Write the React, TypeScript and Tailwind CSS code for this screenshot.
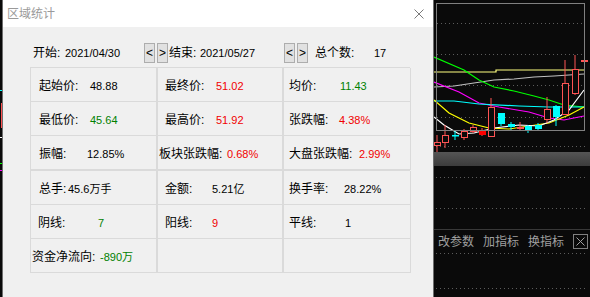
import clsx from 'clsx';

type Stat = {
  label: string;
  value: string;
  color: string;
  pad: string;
  labelW: string;
};

const RED = 'text-[#f00000]';
const GREEN = 'text-[#008000]';
const BLACK = 'text-black';

const priceRows: Stat[][] = [
  [
    { label: '起始价:', value: '48.88', color: BLACK, pad: 'pl-[8px]', labelW: 'w-[51px]' },
    { label: '最终价:', value: '51.02', color: RED, pad: 'pl-[7px]', labelW: 'w-[51px]' },
    { label: '均价:', value: '11.43', color: GREEN, pad: 'pl-[5px]', labelW: 'w-[51px]' },
  ],
  [
    { label: '最低价:', value: '45.64', color: GREEN, pad: 'pl-[8px]', labelW: 'w-[51px]' },
    { label: '最高价:', value: '51.92', color: RED, pad: 'pl-[7px]', labelW: 'w-[51px]' },
    { label: '张跌幅:', value: '4.38%', color: RED, pad: 'pl-[5px]', labelW: 'w-[50px]' },
  ],
  [
    { label: '振幅:', value: '12.85%', color: BLACK, pad: 'pl-[8px]', labelW: 'w-[48px]' },
    { label: '板块张跌幅:', value: '0.68%', color: RED, pad: 'pl-[1px]', labelW: 'w-[68px]' },
    { label: '大盘张跌幅:', value: '2.99%', color: RED, pad: 'pl-[5px]', labelW: 'w-[70px]' },
  ],
];

const volumeRows: (Stat | null)[][] = [
  [
    { label: '总手:', value: '45.6万手', color: BLACK, pad: 'pl-[8px]', labelW: 'w-[29px]' },
    { label: '金额:', value: '5.21亿', color: BLACK, pad: 'pl-[7px]', labelW: 'w-[47px]' },
    { label: '换手率:', value: '28.22%', color: BLACK, pad: 'pl-[5px]', labelW: 'w-[55px]' },
  ],
  [
    { label: '阴线:', value: '7', color: GREEN, pad: 'pl-[7px]', labelW: 'w-[60px]' },
    { label: '阳线:', value: '9', color: RED, pad: 'pl-[7px]', labelW: 'w-[47px]' },
    { label: '平线:', value: '1', color: BLACK, pad: 'pl-[5px]', labelW: 'w-[56px]' },
  ],
  [
    { label: '资金净流向:', value: '-890万', color: GREEN, pad: 'pl-[1px]', labelW: 'w-[68px]' },
    null,
    null,
  ],
];

function StatCell({ stat, last }: { stat: Stat | null; last: boolean }) {
  return (
    <div
      className={clsx(
        'flex h-[34px] items-center border-b border-[#dadada] pt-[3px] text-[12px] whitespace-nowrap',
        last ? 'border-r' : 'border-r-2',
        stat?.pad,
      )}
    >
      {stat ? (
        <>
          <span className={clsx('shrink-0 text-black', stat.labelW)}>{stat.label}</span>
          <span className={clsx('text-[11px]', stat.color)}>{stat.value}</span>
        </>
      ) : null}
    </div>
  );
}

function StatBlock({ rows }: { rows: (Stat | null)[][] }) {
  return (
    <div className="grid w-[380px] grid-cols-[127px_126px_127px] border-t border-l border-[#dadada]">
      {rows.flatMap((row, r) =>
        row.map((stat, c) => <StatCell key={`${r}-${c}`} stat={stat} last={c === 2} />),
      )}
    </div>
  );
}

function StepButton({ children, className }: { children: string; className?: string }) {
  return (
    <span
      className={clsx(
        'flex h-[20px] w-[11px] shrink-0 items-center justify-center border border-[#adadad] bg-[#e1e1e1] text-[12px] leading-none text-black',
        className,
      )}
    >
      {children}
    </span>
  );
}

function Dotted() {
  return (
    <div className="mx-[2px] h-px bg-[image:repeating-linear-gradient(90deg,#5c5c5c_0_1px,transparent_1px_4px)]" />
  );
}

type Candle = { x: number; top: number; bot: number; hi: number; lo: number; kind: 'up' | 'down' | 'fill' };

const candles: Candle[] = [
  { x: 0, top: 142, bot: 145, hi: 135, lo: 152, kind: 'up' },
  { x: 8, top: 135, bot: 142, hi: 125, lo: 148, kind: 'up' },
  { x: 18, top: 135, bot: 136, hi: 131, lo: 140, kind: 'down' },
  { x: 27, top: 131, bot: 137, hi: 129, lo: 140, kind: 'up' },
  { x: 36, top: 127, bot: 131, hi: 125, lo: 133, kind: 'up' },
  { x: 45, top: 130, bot: 135, hi: 128, lo: 136, kind: 'fill' },
  { x: 54, top: 107, bot: 136, hi: 98, lo: 136, kind: 'up' },
  { x: 64, top: 113, bot: 124, hi: 113, lo: 126, kind: 'down' },
  { x: 74, top: 124, bot: 127, hi: 122, lo: 130, kind: 'down' },
  { x: 83, top: 127, bot: 128, hi: 122, lo: 130, kind: 'up' },
  { x: 91, top: 126, bot: 131, hi: 125, lo: 133, kind: 'down' },
  { x: 101, top: 125, bot: 129, hi: 123, lo: 131, kind: 'down' },
  { x: 110, top: 109, bot: 119, hi: 97, lo: 123, kind: 'up' },
  { x: 119, top: 106, bot: 117, hi: 105, lo: 126, kind: 'down' },
  { x: 128, top: 83, bot: 114, hi: 60, lo: 114, kind: 'up' },
  { x: 138, top: 69, bot: 93, hi: 55, lo: 95, kind: 'up' },
  { x: 147, top: 60, bot: 61, hi: 60, lo: 61, kind: 'up' },
];

const lines: { color: string; points: string }[] = [
  { color: '#ffff80', points: '0,72 62,72 62,70 150,70' },
  { color: '#c0c0c0', points: '0,87 20,86 40,83 60,80 80,79 100,77 120,76 150,74' },
  { color: '#00ff00', points: '0,57 30,70 45,80 60,87 80,91 100,96 115,100 130,105 150,107' },
  { color: '#ff00ff', points: '0,82 25,92 45,103 65,107 95,112 115,118 130,120 150,116' },
  { color: '#00ffff', points: '0,101 20,101 45,104 85,106 115,107 150,107' },
  { color: '#ffff00', points: '0,100 15,113 35,123 55,128 75,129 95,126 115,123 135,115 150,107' },
  { color: '#ffffff', points: '0,117 10,125 25,134 40,133 60,128 85,125 105,126 120,120 135,110 150,90' },
];

function KLineChart() {
  return (
    <svg width="156" height="152" className="block">
      {[23, 54, 85, 117].map((y) => (
        <line key={y} x1="3" x2="150" y1={y + 0.5} y2={y + 0.5} stroke="#5c5c5c" strokeDasharray="1 3" />
      ))}
      <line x1="2" x2="154" y1="146.5" y2="146.5" stroke="#5c5c5c" strokeDasharray="1 3" />
      {lines.map((l) => (
        <polyline key={l.color} points={l.points} fill="none" stroke={l.color} strokeWidth="1.2" />
      ))}
      {candles.map((c) => {
        const color = c.kind === 'down' ? '#00ffff' : '#ff5454';
        const mid = c.x + 3;
        return (
          <g key={c.x}>
            <line x1={mid} x2={mid} y1={c.hi} y2={c.lo} stroke={color} />
            {c.kind === 'up' ? (
              <rect x={c.x + 0.5} y={c.top + 0.5} width="6" height={Math.max(c.bot - c.top, 1)} fill="#0a0a0a" stroke={color} />
            ) : (
              <rect x={c.x} y={c.top} width="7" height={Math.max(c.bot - c.top, 1.5)} fill={c.kind === 'fill' ? '#ff0000' : color} />
            )}
          </g>
        );
      })}
      <rect x="2.5" y="3.5" width="148" height="127" fill="none" stroke="#808080" />
    </svg>
  );
}

function ChartPane() {
  return (
    <div className="flex h-[297px] flex-1 flex-col bg-[#0a0a0a]">
      <KLineChart />
      <div className="h-[14px] bg-gradient-to-b from-[#555555] to-[#3c3c3c]" />
      <div className="h-[11px]" />
      <Dotted />
      <div className="h-[30px]" />
      <Dotted />
      <div className="h-[20px]" />
      <div className="flex h-[24px] items-center gap-[9px] border-t border-[#383838] pl-[4px] text-[12px] text-[#a0a0a0]">
        <span>改参数</span>
        <span>加指标</span>
        <span>换指标</span>
        <span className="flex h-[15px] w-[15px] items-center justify-center border border-[#808080]">
          <svg width="9" height="9" viewBox="0 0 9 9">
            <path d="M0.5 0.5L8.5 8.5M8.5 0.5L0.5 8.5" stroke="#a0a0a0" fill="none" />
          </svg>
        </span>
      </div>
      <Dotted />
      <div className="h-[34px]" />
      <Dotted />
    </div>
  );
}

export default function App() {
  return (
    <div className="flex h-[297px] w-[590px] overflow-hidden bg-[#0a0a0a] font-['Liberation_Sans','Noto_Sans_CJK_SC',sans-serif]">
      <svg width="2" height="297" className="block shrink-0">
        <rect x="0" y="90" width="2" height="1" fill="#00ffff" />
        <rect x="1" y="103" width="1" height="25" fill="#ff5050" />
        <rect x="0" y="137" width="2" height="1" fill="#ffffff" />
        <rect x="0" y="163" width="2" height="1" fill="#00ff00" />
        <rect x="0" y="170" width="2" height="1" fill="#ff00ff" />
      </svg>

      <div className="flex h-[297px] w-[432px] shrink-0 flex-col border-x border-[#6e6e6e]">
        <div className="flex h-[27px] items-center justify-between bg-white pl-[4px] pr-[9px]">
          <span className="text-[12px] text-[#9a9a9a]">区域统计</span>
          <svg width="10" height="10" viewBox="0 0 10 10">
            <path d="M0.5 0.5L9.5 9.5M9.5 0.5L0.5 9.5" stroke="#7a7a7a" fill="none" />
          </svg>
        </div>

        <div className="flex-1 bg-[#f0f0f0] pl-[27px] pt-[16px]">
          <div className="flex h-[20px] items-center whitespace-nowrap pl-[3px] text-[12px] text-black">
            <span className="flex w-[111px] shrink-0 items-center">
              <span className="w-[32px]">开始:</span>
              <span className="text-[11px]">2021/04/30</span>
            </span>
            <StepButton>&lt;</StepButton>
            <StepButton className="ml-[2px]">&gt;</StepButton>
            <span className="flex w-[116px] shrink-0 items-center pl-[1px]">
              <span className="w-[31px]">结束:</span>
              <span className="text-[11px]">2021/05/27</span>
            </span>
            <StepButton>&lt;</StepButton>
            <StepButton className="ml-[2px]">&gt;</StepButton>
            <span className="ml-[7px] w-[59px] shrink-0">总个数:</span>
            <span className="text-[11px]">17</span>
          </div>

          <div className="mt-[4px]">
            <StatBlock rows={priceRows} />
            <StatBlock rows={volumeRows} />
          </div>
        </div>
      </div>

      <ChartPane />
    </div>
  );
}
